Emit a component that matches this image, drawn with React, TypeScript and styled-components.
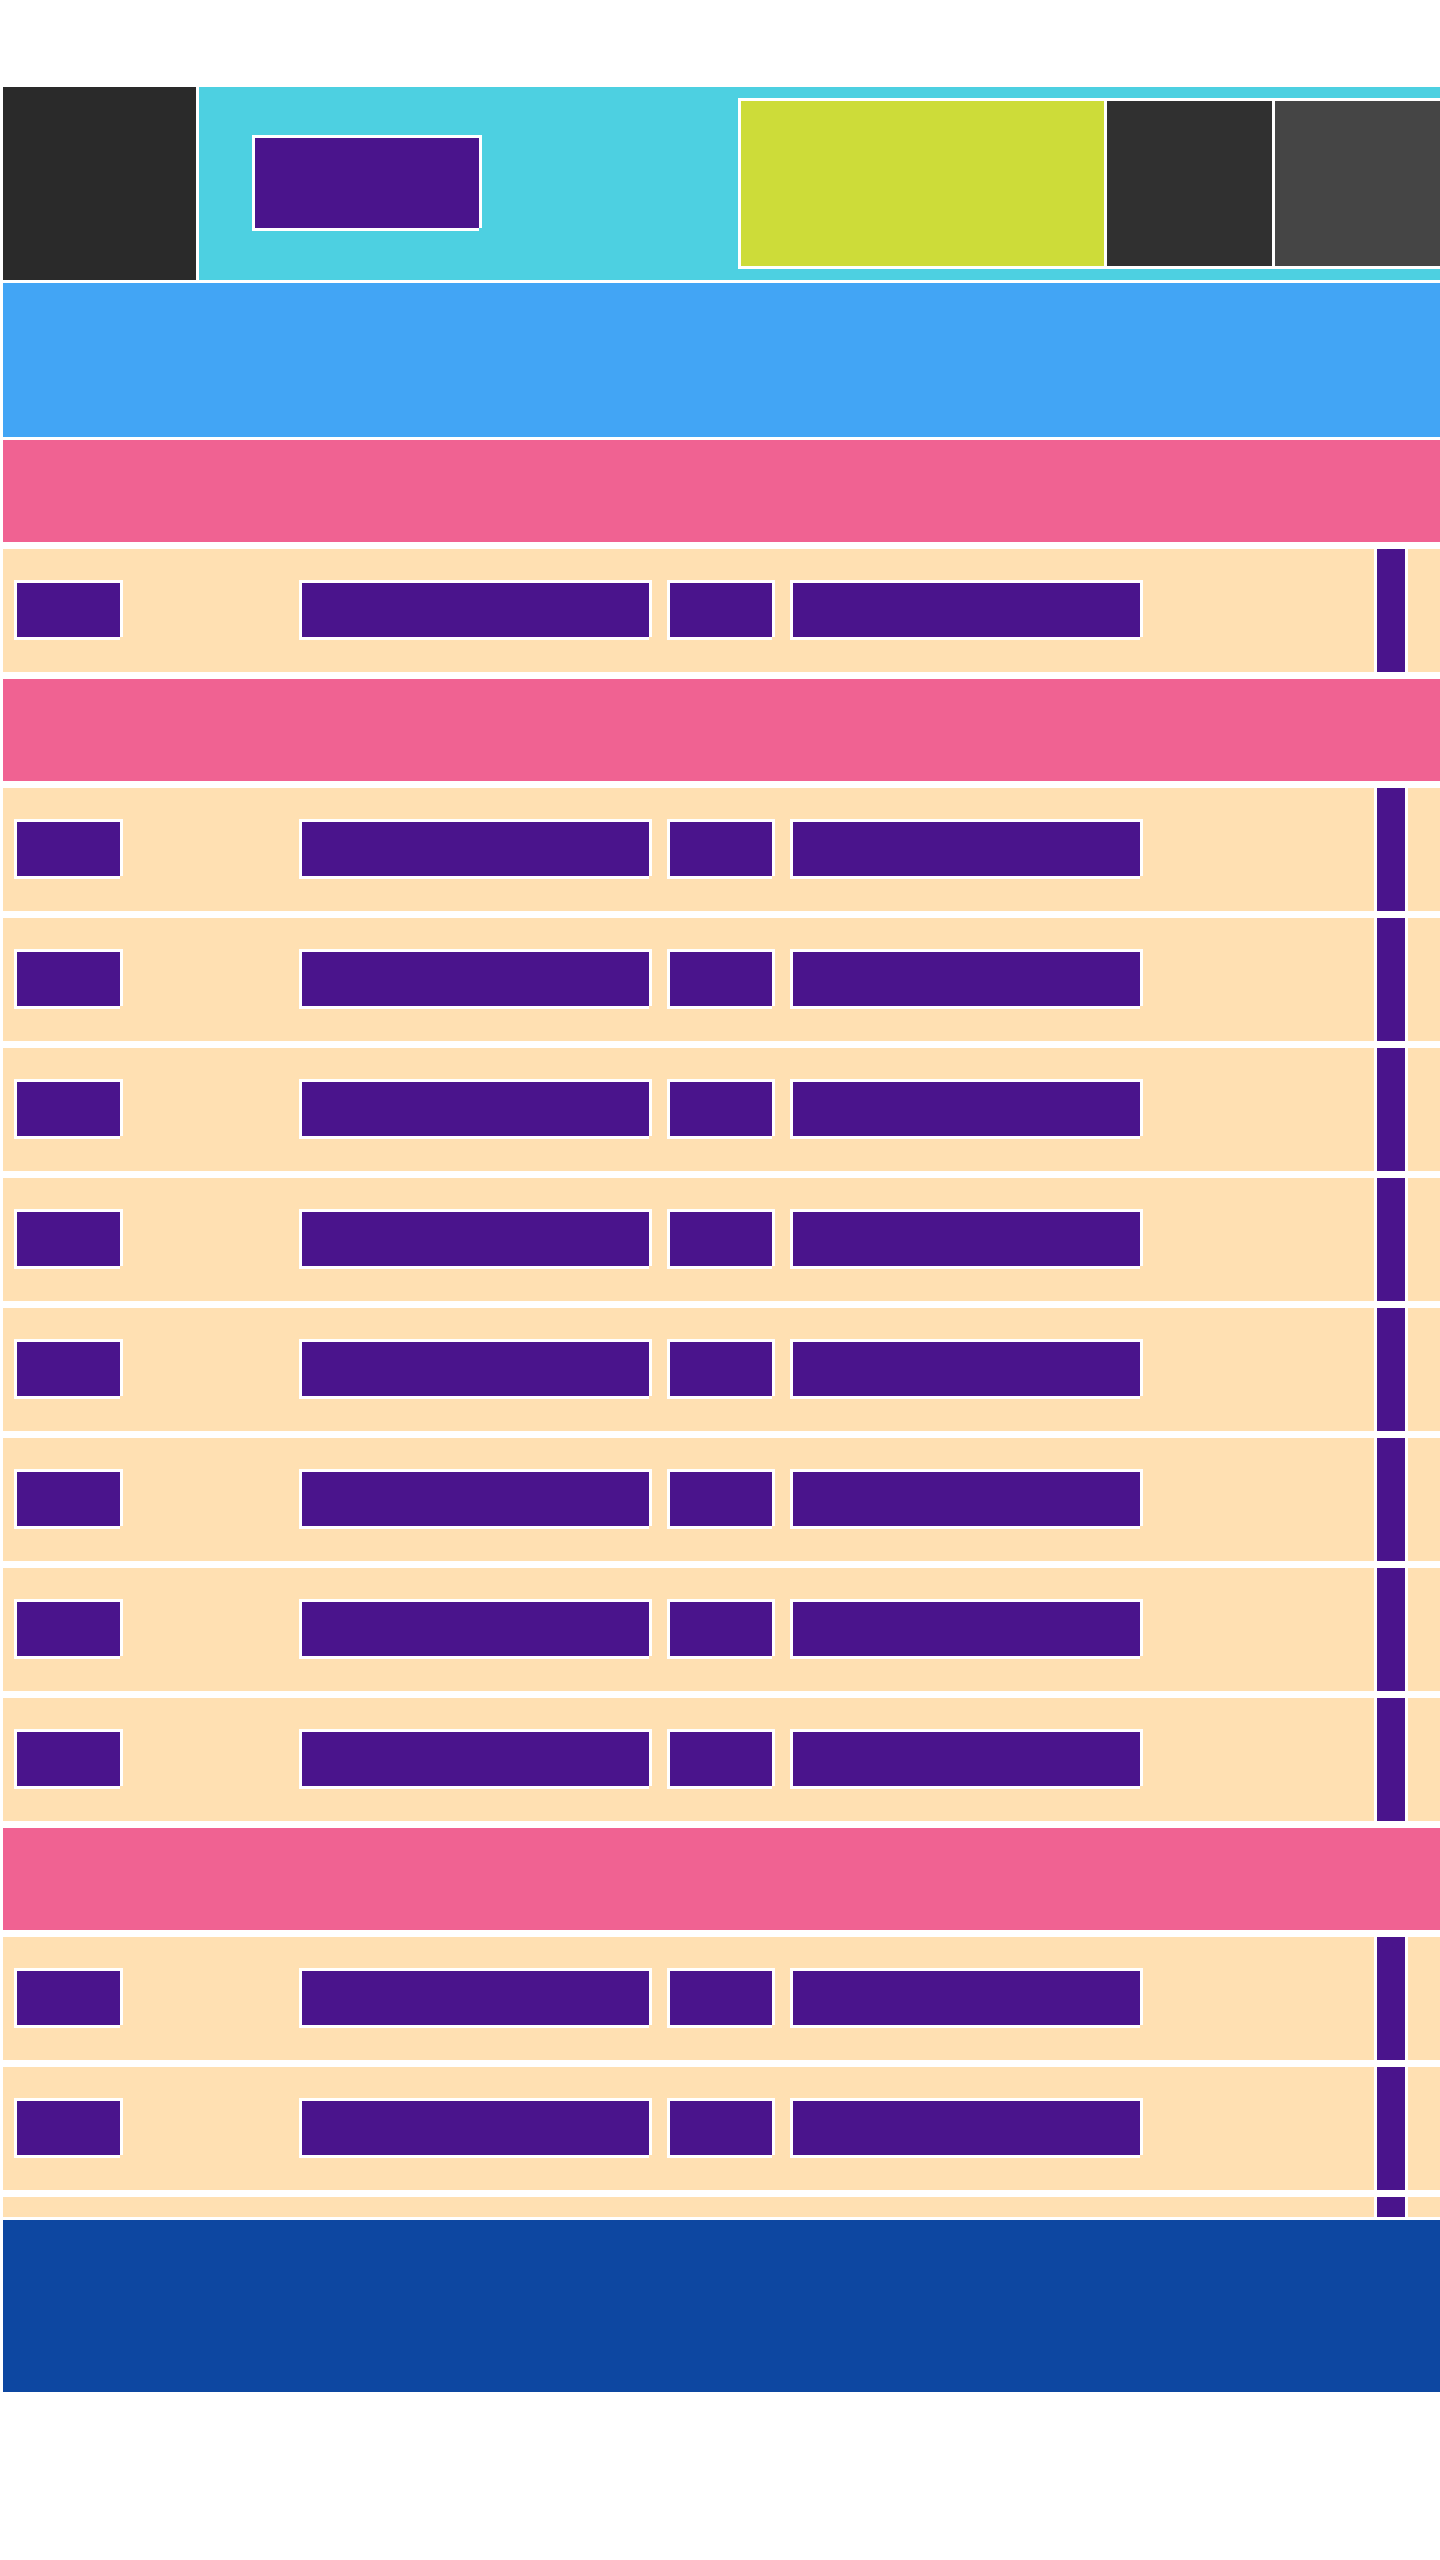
import React from 'react';
import styled, {createGlobalStyle} from 'styled-components';

const PURPLE = '#4a148c';

// white frame around a chip, with the bottom right corner left open
const frame = `
    box-shadow: 3px 0 0 #fff, -3px 0 0 #fff, 0 -3px 0 #fff, 0 3px 0 #fff,
        -3px -3px 0 #fff, 3px -3px 0 #fff, -3px 3px 0 #fff;
`;

const GlobalStyle = createGlobalStyle`
    html, body {
        margin: 0;
        padding: 0;
        background: #fff;
        overflow-x: hidden;
        font-family: "Liberation Sans", Arial, sans-serif;
    }
`;

const Page = styled.div`
    box-sizing: border-box;
    width: 1443px;
    padding: 87px 0 0 3px;
    display: flex;
    flex-direction: column;
    gap: 3px;
`;

const Header = styled.header`
    display: flex;
    gap: 3px;
    height: 193px;
`;

const Logo = styled.div`
    width: 193px;
    flex-shrink: 0;
    background: #2a2a2a;
`;

const TopBar = styled.div`
    flex: 1;
    display: flex;
    align-items: center;
    padding-left: 56px;
    background: #4dd0e1;
`;

const ActionButton = styled.div`
    align-self: flex-start;
    margin-top: 51px;
    width: 224px;
    height: 90px;
    background: ${PURPLE};
    ${frame}
`;

const Toolbar = styled.div`
    margin-left: auto;
    display: flex;
    gap: 3px;
    padding: 3px;
    background: #fff;
`;

const Tile = styled.div<{ $w: number; $bg: string }>`
    width: ${p => p.$w}px;
    height: 165px;
    background: ${p => p.$bg};
`;

const Hero = styled.section`
    height: 154px;
    background: #42a5f5;
`;

const List = styled.div`
    height: 1777px;
    overflow: hidden;
    display: flex;
    flex-direction: column;
    gap: 7px;
`;

const SectionHead = styled.div`
    flex-shrink: 0;
    height: 102px;
    background: #f06292;
`;

const Row = styled.div`
    flex-shrink: 0;
    display: flex;
    gap: 21px;
    padding: 0 35px 0 14px;
    background: #ffe0b2;
`;

const Lead = styled.div`
    width: 264px;
    flex-shrink: 0;
`;

const Chip = styled.div<{ $w: number }>`
    width: ${p => p.$w}px;
    height: 54px;
    margin: 34px 0 35px;
    flex-shrink: 0;
    background: ${PURPLE};
    ${frame}
`;

const Bar = styled.div`
    margin-left: auto;
    width: 28px;
    background: ${PURPLE};
    border-left: 3px solid #fff;
    border-right: 3px solid #fff;
`;

const Footer = styled.footer`
    height: 172px;
    background: #0d47a1;
`;

const sections = [1, 8, 3];

const ListRow = () => (
    <Row>
        <Lead><Chip $w={103}/></Lead>
        <Chip $w={347}/>
        <Chip $w={102}/>
        <Chip $w={347}/>
        <Bar/>
    </Row>
);

export default function App() {
    return (
        <>
            <GlobalStyle/>
            <Page>
                <Header>
                    <Logo/>
                    <TopBar>
                        <ActionButton/>
                        <Toolbar>
                            <Tile $w={363} $bg="#cddc39"/>
                            <Tile $w={165} $bg="#303030"/>
                            <Tile $w={165} $bg="#454545"/>
                        </Toolbar>
                    </TopBar>
                </Header>
                <Hero/>
                <List>
                    {sections.map((count, i) => (
                        <React.Fragment key={i}>
                            <SectionHead/>
                            {Array.from({length: count}).map((_, j) => <ListRow key={j}/>)}
                        </React.Fragment>
                    ))}
                </List>
                <Footer/>
            </Page>
        </>
    );
}
